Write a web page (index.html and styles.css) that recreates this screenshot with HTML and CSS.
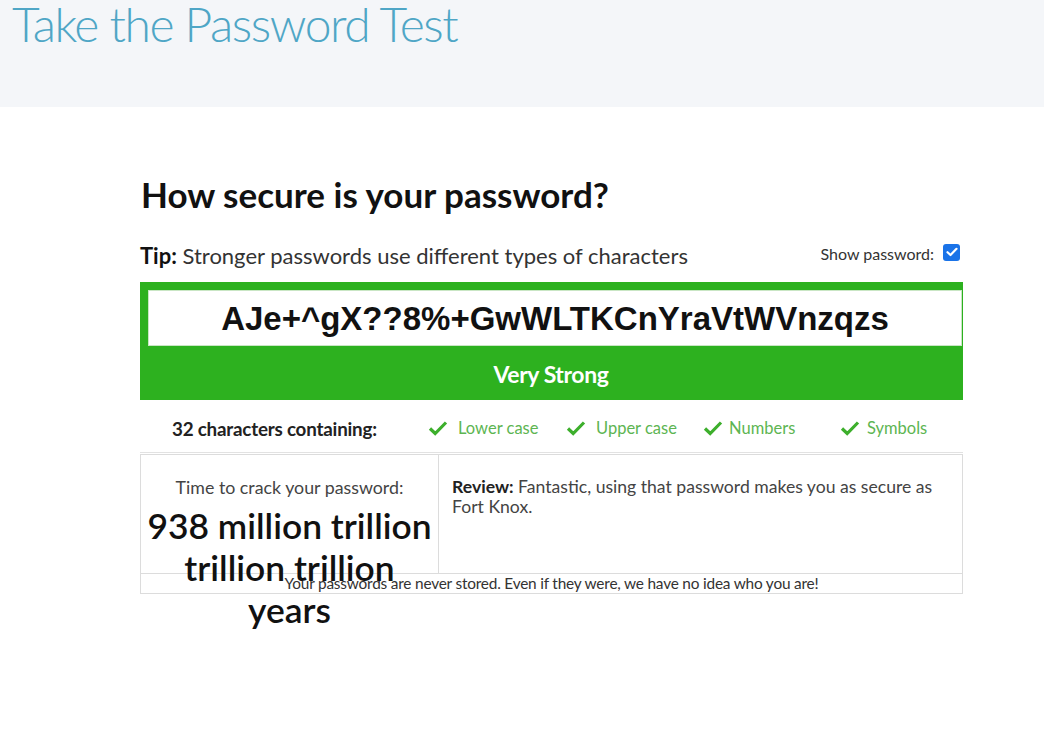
FILE: index.html
```html
<!DOCTYPE html>
<html>
<head>
<meta charset="utf-8">
<link rel="stylesheet" href="styles.css">
</head>
<body>
<header class="top">
  <h1 class="site-title">Take the Password Test</h1>
</header>
<main class="main">
  <h2 class="heading">How secure is your password?</h2>
  <div class="tip-row">
    <p class="tip"><b>Tip:</b> Stronger passwords use different types of characters</p>
    <label class="show">Show password: <span class="cb"><svg width="12" height="10" viewBox="0 0 12 10"><path d="M1.5 5.2 L4.5 8 L10.5 1.8" fill="none" stroke="#fff" stroke-width="2.2" stroke-linecap="round" stroke-linejoin="round"/></svg></span></label>
  </div>
  <div class="meter">
    <div class="pw">AJe+^gX??8%+GwWLTKCnYraVtWVnzqzs</div>
    <div class="strength">Very Strong</div>
  </div>
  <div class="contains">
    <span class="count">32 characters containing:</span>
    <span class="crit c1"><svg class="tick" viewBox="0 0 20 16"><path d="M2 8.5 L7.2 13.5 L18 2.5" fill="none" stroke="#3daf2c" stroke-width="3.2"/></svg>Lower case</span>
    <span class="crit c2"><svg class="tick" viewBox="0 0 20 16"><path d="M2 8.5 L7.2 13.5 L18 2.5" fill="none" stroke="#3daf2c" stroke-width="3.2"/></svg>Upper case</span>
    <span class="crit c3"><svg class="tick" viewBox="0 0 20 16"><path d="M2 8.5 L7.2 13.5 L18 2.5" fill="none" stroke="#3daf2c" stroke-width="3.2"/></svg>Numbers</span>
    <span class="crit c4"><svg class="tick" viewBox="0 0 20 16"><path d="M2 8.5 L7.2 13.5 L18 2.5" fill="none" stroke="#3daf2c" stroke-width="3.2"/></svg>Symbols</span>
  </div>
  <div class="results">
    <div class="result-row">
      <div class="crack">
        <div class="crack-label">Time to crack your password:</div>
        <div class="crack-time">938 million trillion<br>trillion trillion<br>years</div>
      </div>
      <div class="review"><b>Review:</b> Fantastic, using that password makes you as secure as Fort Knox.</div>
    </div>
    <div class="note">Your passwords are never stored. Even if they were, we have no idea who you are!</div>
  </div>
</main>
</body>
</html>
```
FILE: styles.css
```css
html, body {
  margin: 0;
  padding: 0;
  background: #fff;
  font-family: Lato, "Open Sans", sans-serif;
}
.top {
  background: #f4f6f9;
  height: 107px;
  overflow: hidden;
}
.site-title {
  margin: 0;
  padding: 0 0 0 12px;
  font-weight: 300;
  font-size: 48px;
  line-height: 48px;
  letter-spacing: -1.45px;
  color: #4fa6c6;
}
.main {
  width: 823px;
  margin-left: 140px;
  padding-top: 67px;
  padding-bottom: 60px;
}
.heading {
  margin: 0;
  font-size: 35px;
  line-height: 40px;
  font-weight: 700;
  color: #111;
  padding-left: 1px;
}
.tip-row {
  display: flex;
  justify-content: space-between;
  align-items: center;
  margin-top: 27px;
  height: 28px;
}
.tip {
  margin: 0;
  font-size: 22px;
  color: #333;
}
.tip b { color: #111; }
.show {
  font-size: 16px;
  color: #333;
  display: flex;
  align-items: center;
  gap: 9px;
  margin-right: 3px;
  margin-top: -3px;
}
.cb {
  width: 17px;
  height: 17px;
  background: #1a73e8;
  border-radius: 3px;
  display: flex;
  align-items: center;
  justify-content: center;
  margin-top: -3px;
}
.meter {
  margin-top: 13px;
  background: #2db11f;
  padding: 8px 1px 0 8px;
  height: 110px;
}
.pw {
  background: #fff;
  height: 56px;
  display: flex;
  align-items: center;
  justify-content: center;
  font-family: "Liberation Sans", Arial, sans-serif;
  font-weight: 700;
  font-size: 33px;
  color: #111;
  border: 1px solid #c9e6c4;
  box-sizing: border-box;
  padding-top: 2px;
}
.strength {
  text-align: center;
  color: #fff;
  font-weight: 700;
  font-size: 23px;
  line-height: 56px;
  letter-spacing: -0.4px;
  margin-left: -8px;
}
.contains {
  display: flex;
  align-items: center;
  height: 53px;
  padding-top: 4px;
  border-bottom: 1px solid #e2e2e2;
  box-sizing: border-box;
}
.count {
  font-weight: 700;
  font-size: 18.8px;
  letter-spacing: -0.2px;
  color: #222;
  margin-left: 32px;
  width: 256px;
}
.crit {
  display: flex;
  align-items: center;
  color: #5db552;
  font-size: 16.5px;
  gap: 10px;
}
.tick { width: 20px; height: 16px; }
.c1 { width: 138px; }
.c2 { width: 137px; }
.c3 { width: 137px; gap: 6px; }
.c4 { gap: 7px; }
.results {
  border: 1px solid #dcdcdc;
  margin-top: 1px;
}
.result-row {
  display: flex;
  height: 118px;
}
.crack {
  width: 297px;
  flex: none;
  border-right: 1px solid #dcdcdc;
  text-align: center;
  padding-top: 22px;
  position: relative;
  z-index: 1;
}
.crack-label {
  font-size: 17.8px;
  color: #444;
  line-height: 20px;
}
.crack-time {
  font-size: 35.4px;
  font-weight: 600;
  line-height: 42px;
  color: #111;
  margin-top: 8px;
  white-space: nowrap;
}
.review {
  flex: 1;
  font-size: 17.6px;
  line-height: 20px;
  color: #444;
  padding: 22px 20px 0 13px;
}
.review b { color: #222; }
.note {
  border-top: 1px solid #dcdcdc;
  text-align: center;
  font-size: 15.4px;
  line-height: 19px;
  color: #333;
  letter-spacing: -0.2px;
}
```
